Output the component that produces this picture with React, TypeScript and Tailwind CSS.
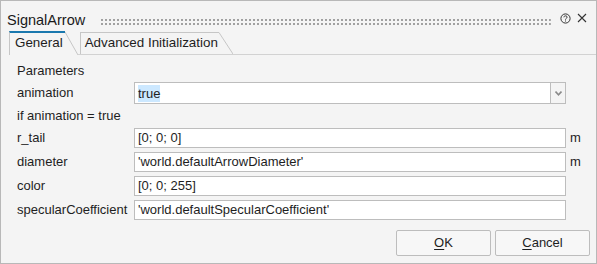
import React from "react";

function HelpIcon() {
  return (
    <svg width="11" height="11" viewBox="0 0 11 11" className="mt-[12px] shrink-0">
      <circle cx="5.5" cy="5.5" r="4.6" fill="none" stroke="#333" strokeWidth="1" />
      <path d="M3.9 4.3 C3.9 2.4 7.1 2.4 7.1 4.2 C7.1 5.3 5.5 5.3 5.5 6.6" fill="none" stroke="#333" strokeWidth="1" />
      <rect x="5" y="7.5" width="1" height="1" fill="#333" />
    </svg>
  );
}

function CloseIcon() {
  return (
    <svg width="10" height="10" viewBox="0 0 10 10" className="mt-[12px] ml-[6px] shrink-0">
      <path d="M1 1 L9 9 M9 1 L1 9" stroke="#333" strokeWidth="1.1" />
    </svg>
  );
}

function Field({ label, value, unit }: { label: string; value: string; unit?: string }) {
  return (
    <div className="flex h-[20px] items-center">
      <div className="w-[117px] shrink-0 whitespace-nowrap">{label}</div>
      <div className="flex h-full w-[432px] shrink-0 items-center overflow-hidden whitespace-nowrap border border-[#bdbdbd] bg-white pl-[3px]">
        {value}
      </div>
      <div className="pl-[4px]">{unit}</div>
    </div>
  );
}

export default function App() {
  return (
    <div className="flex h-[264px] w-[597px] flex-col border border-[#b8b8b8] bg-[#f4f4f4] font-['Liberation_Sans',Arial,sans-serif] text-[13px] text-[#1e1e1e]">
      {/* title bar */}
      <div className="flex h-[30px] items-start pl-[6px] pr-[9px]">
        <div className="mt-[10px] text-[14.5px] leading-[18px] text-[#1a1a1a]">SignalArrow</div>
        <svg className="mt-[18px] ml-[16px] mr-[9px] h-[6px] flex-1">
          <defs>
            <pattern id="grip" width="4" height="4" patternUnits="userSpaceOnUse">
              <rect x="0" y="0" width="2" height="2" fill="#a0a0a0" />
            </pattern>
          </defs>
          <rect width="100%" height="6" fill="url(#grip)" />
        </svg>
        <HelpIcon />
        <CloseIcon />
      </div>

      {/* tabs */}
      <div className="flex h-[24px] pl-[8px] text-[13.4px]">
        <div className="flex h-full border-l border-t-2 border-l-[#c6c6c6] border-t-[#1a78ae] pl-[5px] pr-[2px] pt-[2px] leading-[16px]">
          General
        </div>
        <svg width="13" height="24" className="shrink-0">
          <path d="M0 1 L13 24" stroke="#c6c6c6" strokeWidth="1" fill="none" />
        </svg>
        <div className="flex h-full border-b border-[#d2d2d2] pl-[2px]">
          <div className="mt-[1px] border-l border-t border-[#c6c6c6] pl-[4px] pr-[1px] pt-[2px] leading-[16px] whitespace-nowrap">
            Advanced Initialization
          </div>
          <svg width="14" height="23" className="shrink-0">
            <path d="M0 1.5 L14 23" stroke="#c6c6c6" strokeWidth="1" fill="none" />
          </svg>
        </div>
        <div className="h-full flex-1 border-b border-[#d2d2d2]" />
      </div>

      {/* parameters */}
      <div className="flex flex-col pl-[16px] pt-[6px]">
        <div className="flex h-[20px] items-center">Parameters</div>
        <div className="mt-[1px] flex h-[22px] items-center">
          <div className="w-[117px] shrink-0">animation</div>
          <div className="flex h-full w-[417px] items-center border border-[#bdbdbd] bg-white pl-[3px]">
            <span className="bg-[#cce8ff] leading-[17px]">true</span>
          </div>
          <div className="flex h-full w-[15px] items-center justify-center border border-l-0 border-[#bdbdbd] bg-[#f4f4f4]">
            <svg width="7" height="5" viewBox="0 0 7 5">
              <path d="M0.5 0.5 L3.5 3.8 L6.5 0.5" stroke="#8a8a8a" strokeWidth="1.6" fill="none" />
            </svg>
          </div>
        </div>
        <div className="flex h-[24px] items-center">if animation = true</div>
        <div className="flex flex-col gap-[4px]">
          <Field label="r_tail" value="[0; 0; 0]" unit="m" />
          <Field label="diameter" value="'world.defaultArrowDiameter'" unit="m" />
          <Field label="color" value="[0; 0; 255]" />
          <Field label="specularCoefficient" value="'world.defaultSpecularCoefficient'" />
        </div>
      </div>

      {/* buttons */}
      <div className="mt-[10px] flex justify-end gap-[4px] pr-[6px]">
        <button className="flex h-[26px] w-[95px] items-center justify-center rounded-[2px] border border-[#bdbdbd] bg-[#f7f7f7]">
          <span>
            <span className="underline underline-offset-2">O</span>K
          </span>
        </button>
        <button className="flex h-[26px] w-[95px] items-center justify-center rounded-[2px] border border-[#bdbdbd] bg-[#f7f7f7]">
          <span>
            <span className="underline underline-offset-2">C</span>ancel
          </span>
        </button>
      </div>
    </div>
  );
}
